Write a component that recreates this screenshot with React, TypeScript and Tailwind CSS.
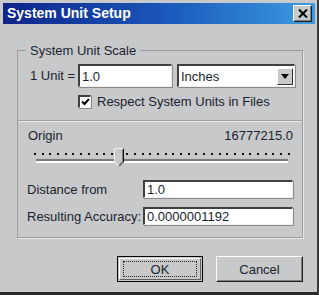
import React from "react";

const sunken =
  "bg-white border-t-2 border-l-2 border-b border-r border-t-[#404040] border-l-[#404040] border-b-[#f0f0f0] border-r-[#f0f0f0] shadow-[1px_1px_0_#8a8a8a]";

function Dots() {
  const dots = Array.from({ length: 34 });
  return (
    <div className="flex justify-between w-[256px]">
      {dots.map((_, i) => (
        <div key={i} className="w-[2px] h-[2px] bg-[#111]" />
      ))}
    </div>
  );
}

export default function App() {
  return (
    <div
      className="w-[319px] h-[295px] box-border bg-[#c8c9ca] border-r-2 border-b-[3px] border-r-[#3a3a3a] border-b-[#2a2a2a] pl-[3px] pt-[3px] flex flex-col text-[13px] leading-[15px] text-[#1a1f30]"
      style={{ fontFamily: '"Liberation Sans", Arial, sans-serif' }}
    >
      {/* Title bar */}
      <div className="h-[21px] mr-[2px] flex items-center justify-between pl-[4px] pr-[3px] bg-gradient-to-r from-[#10238a] via-[#1a55b8] to-[#3d9be0]">
        <span className="text-white font-bold text-[14px] leading-[17px]">System Unit Setup</span>
        <div className="w-[19px] h-[17px] bg-[#c8c9ca] border border-t-white border-l-white border-b-[#202020] border-r-[#202020] shadow-[inset_-1px_-1px_0_#808080] flex items-center justify-center">
          <svg width="10" height="9" viewBox="0 0 10 9">
            <path d="M1 0.5 L9 8.5 M9 0.5 L1 8.5" stroke="#000" strokeWidth="2" />
          </svg>
        </div>
      </div>

      {/* Group box */}
      <fieldset className="ml-[14px] mt-[19px] w-[286px] border border-[#9c9c9c] shadow-[1px_1px_0_#e8e8e8] p-0 pb-[12px]">
        <legend className="ml-[8px] px-[4px]">System Unit Scale</legend>

        <div className="flex items-center mt-[6px] pl-[12px]">
          <span className="w-[48px]">1 Unit =</span>
          <div className={`w-[94px] h-[23px] ${sunken} flex items-center pl-[2px]`}>1.0</div>
          <div className={`ml-[5px] w-[118px] h-[23px] ${sunken} flex items-center justify-between pl-[2px]`}>
            <span>Inches</span>
            <div className="w-[16px] h-[17px] mr-[1px] bg-[#c8c9ca] border border-t-white border-l-white border-b-[#303030] border-r-[#303030] flex items-center justify-center">
              <svg width="8" height="5" viewBox="0 0 8 5">
                <path d="M0 0 H8 L4 5 Z" fill="#000" />
              </svg>
            </div>
          </div>
        </div>

        <div className="flex items-center mt-[7px] ml-[60px]">
          <div className={`w-[13px] h-[13px] ${sunken} flex items-center justify-center`}>
            <svg width="9" height="8" viewBox="0 0 9 8">
              <path d="M1 3.5 L3.5 6 L8 1" stroke="#000" strokeWidth="2" fill="none" />
            </svg>
          </div>
          <span className="ml-[6px]">Respect System Units in Files</span>
        </div>

        <div className="mt-[11px] border-t border-t-[#9c9c9c] border-b border-b-[#ececec]" />

        <div className="flex justify-between mt-[6px] pl-[10px] pr-[9px]">
          <span>Origin</span>
          <span>16777215.0</span>
        </div>

        <div className="relative ml-[16px] mt-[3px] h-[20px] w-[256px]">
          <div className="pt-[7px]">
            <Dots />
          </div>
          <div className="mt-[4px] ml-[2px] w-[252px] h-[4px] border-t-2 border-t-[#7a7a7a] border-b-2 border-b-white" />
          <svg className="absolute left-[80px] top-[2px]" width="10" height="19" viewBox="0 0 10 19">
            <path d="M0.5 0.5 H9.5 V14 L5 18.5 L0.5 14 Z" fill="#c8c9ca" stroke="#f4f4f4" />
            <path d="M9.5 0.5 V14 L5 18.5" fill="none" stroke="#101010" />
            <path d="M8.5 1.5 V13.6 L5 17" fill="none" stroke="#808080" />
          </svg>
        </div>

        <div className="flex items-center mt-[14px] pl-[9px]">
          <span className="w-[116px]">Distance from</span>
          <div className={`w-[150px] h-[18px] ${sunken} flex items-center pl-[2px]`}>1.0</div>
        </div>
        <div className="flex items-center mt-[9px] pl-[9px]">
          <span className="w-[116px]">Resulting Accuracy:</span>
          <div className={`w-[150px] h-[18px] ${sunken} flex items-center pl-[2px]`}>0.0000001192</div>
        </div>
      </fieldset>

      {/* Buttons */}
      <div className="flex ml-[114px] mt-[18px] gap-[13px]">
        <div className="w-[86px] h-[26px] border border-black p-[1px]">
          <div className="w-full h-full border border-t-white border-l-white border-b-[#606060] border-r-[#606060] flex items-center justify-center">
            <div className="w-[74px] h-[16px] border border-dotted border-[#222] flex items-center justify-center">OK</div>
          </div>
        </div>
        <div className="w-[87px] h-[26px] border border-t-white border-l-white border-b-[#202020] border-r-[#202020] shadow-[inset_-1px_-1px_0_#808080] flex items-center justify-center">
          Cancel
        </div>
      </div>
    </div>
  );
}
